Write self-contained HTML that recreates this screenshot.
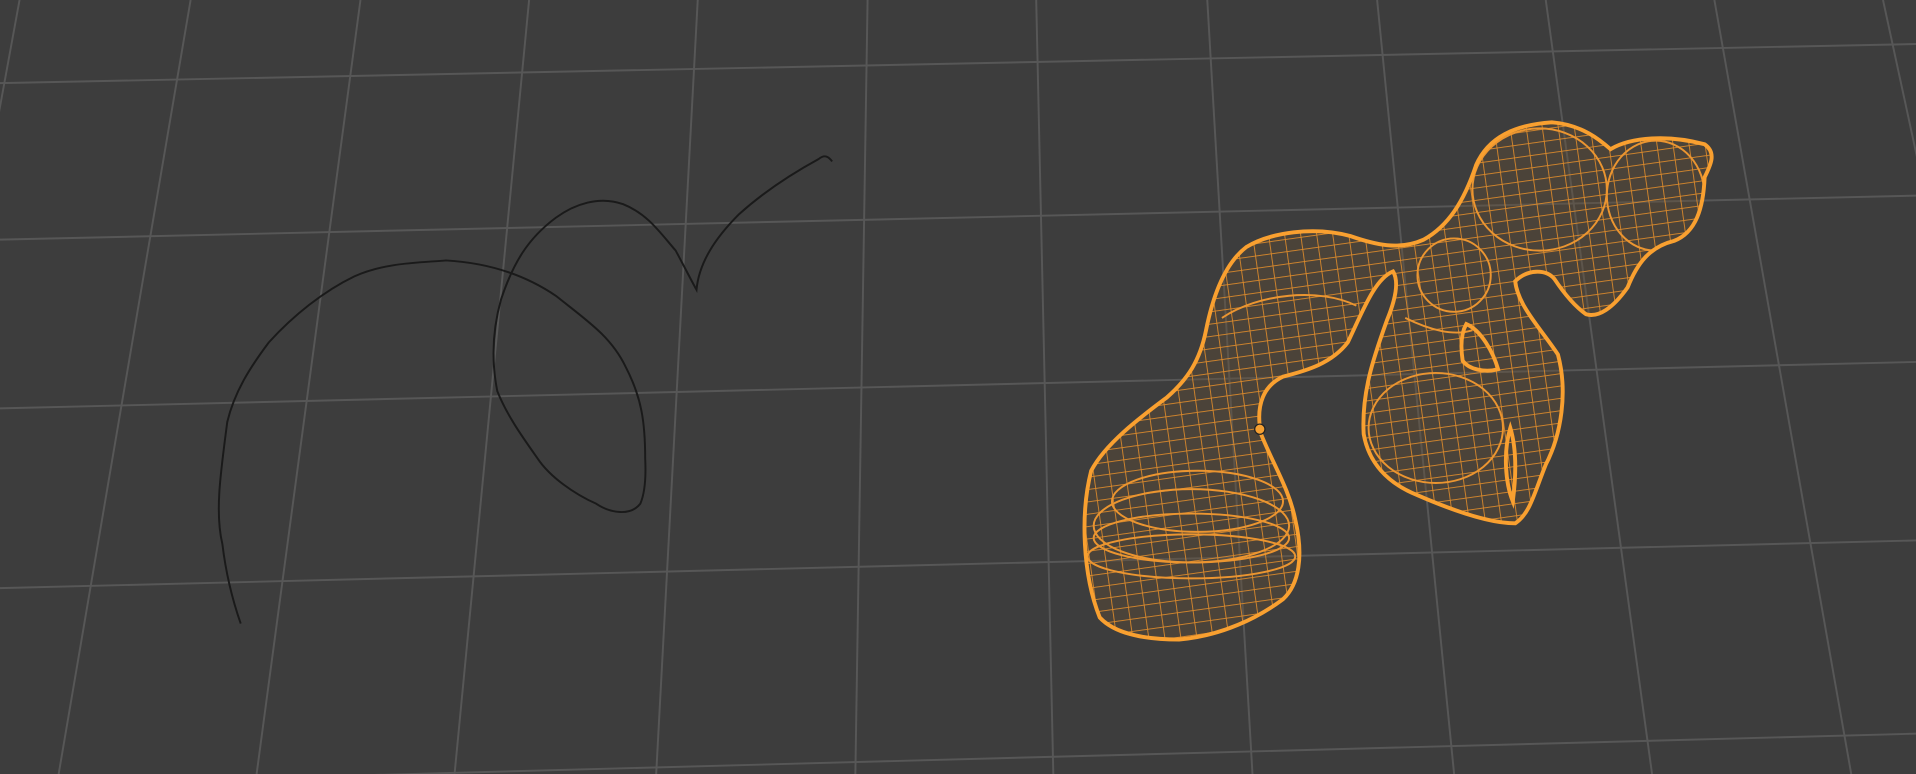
<!DOCTYPE html>
<html><head><meta charset="utf-8"><style>
html,body{margin:0;padding:0;background:#3d3d3d;overflow:hidden}
svg{display:block}
</style></head><body>
<svg width="1916" height="774" viewBox="0 0 1568 633" preserveAspectRatio="none" xmlns="http://www.w3.org/2000/svg">
<defs>
<pattern id="mesh" width="13" height="10" patternUnits="userSpaceOnUse" patternTransform="rotate(-8)">
<path d="M0 0H13M0 0V10" stroke="#de8b2b" stroke-width="1.4" fill="none"/>
</pattern>
<clipPath id="cl"><path id="bodyp" fill-rule="evenodd" d="M900 505 C886 470 884 420 893 385 C905 362 935 340 955 325 C972 310 982 295 987 270 C993 240 1003 215 1020 202 C1040 190 1075 185 1105 193 C1125 200 1145 205 1165 196 C1185 185 1198 165 1208 135 C1218 112 1240 102 1270 100 C1295 102 1310 115 1318 122 C1335 112 1365 110 1395 118 C1405 125 1400 135 1395 145 C1394 170 1388 190 1370 197 C1350 202 1340 215 1332 235 C1320 252 1308 260 1298 257 C1288 250 1280 240 1272 228 C1265 220 1250 220 1240 230 C1242 250 1262 270 1275 290 C1283 320 1278 355 1265 380 C1255 405 1252 420 1240 428 C1220 428 1190 418 1160 405 C1135 395 1120 378 1116 355 C1114 320 1125 290 1135 262 C1142 245 1145 230 1140 222 C1125 228 1115 255 1103 280 C1090 297 1070 303 1050 308 C1035 315 1027 330 1032 355 C1042 380 1055 400 1060 425 C1067 455 1063 478 1050 490 C1030 505 1000 520 965 523 C935 523 912 518 900 505 Z M1200 265 C1212 270 1222 288 1226 302 C1215 305 1202 302 1197 295 C1195 282 1196 272 1200 265 Z M1236 350 C1242 370 1240 395 1238 410 C1232 395 1230 370 1236 350 Z"/></clipPath>
</defs>
<rect width="1568" height="633" fill="#3d3d3d"/>
<g stroke="#575757" stroke-width="1.6" fill="none">
<line x1="0" y1="68" x2="1568" y2="36"/>
<line x1="0" y1="196" x2="1568" y2="160"/>
<line x1="0" y1="334" x2="1568" y2="296"/>
<line x1="0" y1="481" x2="1568" y2="442"/>
<line x1="0" y1="642" x2="1568" y2="600"/>
<line x1="16" y1="0" x2="-100" y2="633"/>
<line x1="156" y1="0" x2="48" y2="633"/>
<line x1="295" y1="0" x2="210" y2="633"/>
<line x1="433" y1="0" x2="372" y2="633"/>
<line x1="571" y1="0" x2="537" y2="633"/>
<line x1="710" y1="0" x2="700" y2="633"/>
<line x1="848" y1="0" x2="862" y2="633"/>
<line x1="988" y1="0" x2="1025" y2="633"/>
<line x1="1127" y1="0" x2="1190" y2="633"/>
<line x1="1265" y1="0" x2="1352" y2="633"/>
<line x1="1403" y1="0" x2="1515" y2="633"/>
<line x1="1541" y1="0" x2="1678" y2="633"/>
</g>
<path fill="none" stroke="#1a1a1a" stroke-width="1.6" d="M197 510 C190 490 185 470 182 445 C176 420 180 390 186 345 C192 320 205 300 220 280 C240 258 265 238 290 226 C315 215 340 215 365 213 C400 215 430 225 455 242 C480 262 500 275 512 300 C525 325 528 345 528 375 C529 395 527 405 524 412 C516 422 500 420 488 412 C470 404 450 390 440 375 C428 358 415 340 407 320 C402 295 403 270 410 245 C420 215 432 195 455 178 C470 167 490 160 510 167 C530 175 540 190 553 205 C560 218 565 228 570 237 C572 215 585 195 605 175 C625 157 648 142 670 130 C675 126 678 128 681 132"/>
<g clip-path="url(#cl)">
<rect x="880" y="90" width="530" height="440" fill="#6e5232" opacity="0.3"/>
<rect x="880" y="90" width="530" height="440" fill="url(#mesh)"/>
<g fill="none" stroke="#eb9530" stroke-width="1.6">
<ellipse cx="975" cy="430" rx="80" ry="30"/>
<ellipse cx="975" cy="440" rx="80" ry="20"/>
<ellipse cx="980" cy="410" rx="70" ry="25"/>
<ellipse cx="975" cy="455" rx="85" ry="18"/>
<ellipse cx="1175" cy="350" rx="55" ry="45"/>
<ellipse cx="1260" cy="155" rx="55" ry="50"/>
<ellipse cx="1355" cy="160" rx="40" ry="45"/>
<ellipse cx="1190" cy="225" rx="30" ry="30"/>
<path d="M1000 260 C1030 240 1080 235 1110 250"/>
<path d="M1150 260 C1170 270 1190 275 1205 270"/>
</g>
</g>
<use href="#bodyp" fill="none" stroke="#f9a030" stroke-width="3.2"/>
<circle cx="1031" cy="351" r="4.2" fill="#f6a032" stroke="#222" stroke-width="1"/>
</svg>
</body></html>
